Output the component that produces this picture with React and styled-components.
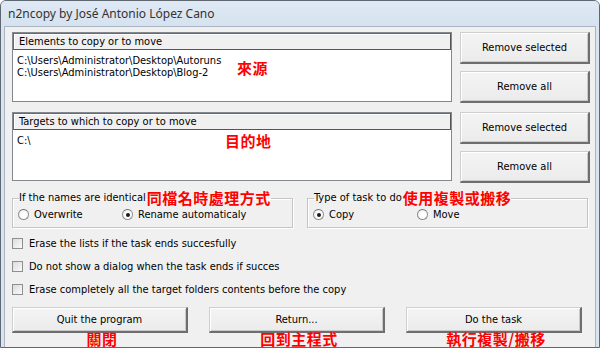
import React from "react";
import styled, { createGlobalStyle } from "styled-components";

const Global = createGlobalStyle`
  html, body { margin: 0; padding: 0; background: #fff; }
  body { width: 600px; height: 348px; overflow: hidden; }
  * { box-sizing: border-box; }
`;

const UI = `"DejaVu Sans Condensed", "Liberation Sans", sans-serif`;
const CJK = `"Noto Sans CJK TC", "Noto Sans CJK SC", sans-serif`;

const Window = styled.div`
  position: relative;
  width: 600px;
  height: 348px;
  border: 1px solid #5f6770;
  border-radius: 6px 6px 0 0;
  background: #d9e4f0;
  display: flex;
  flex-direction: column;
  overflow: hidden;
`;

const TitleBar = styled.div`
  height: 25px;
  flex: none;
  display: flex;
  align-items: center;
  padding-left: 7px;
  font-family: "Noto Sans", "Open Sans", sans-serif;
  font-size: 12px;
  color: #333;
  background: linear-gradient(#dfe9f5, #d6e2ef);
`;

const Client = styled.div`
  flex: 1;
  min-height: 0;
  margin: 0 3px 0 3px;
  border: 1px solid #a8b4c2;
  border-bottom: none;
  background: #f0f0f0;
  padding: 5px 6px 0 7px;
  display: flex;
  flex-direction: column;
  font-family: ${UI};
  font-size: 11px;
  color: #000;
`;

const ListRow = styled.div`
  display: grid;
  grid-template-columns: 440px 130px;
  column-gap: 8px;
  height: 72px;
  flex: none;
  margin-bottom: ${(p) => p.$mb || 0}px;
`;

const ListBox = styled.div`
  position: relative;
  height: ${(p) => p.$h}px;
  background: #fff;
  border: 1px solid #828790;
  display: flex;
  flex-direction: column;
`;

const ListHeader = styled.div`
  height: 17px;
  flex: none;
  background: #f0f0f0;
  border: 1px solid #6b6b6b;
  border-right-color: #555;
  border-bottom-color: #555;
  box-shadow: inset 1px 1px 0 #fff;
  padding-left: 5px;
  display: flex;
  align-items: center;
`;

const ListItems = styled.div`
  padding: 5px 0 0 4px;
  line-height: 12px;
`;

const Item = styled.div`
  white-space: nowrap;
`;

const Note = styled.span`
  font-family: ${CJK};
  font-weight: 700;
  font-size: 15px;
  line-height: 16px;
  color: #ff0000;
  white-space: nowrap;
  letter-spacing: 0.5px;
`;

const ListNote = styled(Note)`
  position: absolute;
  left: ${(p) => p.$x}px;
  top: ${(p) => p.$y}px;
`;

const ButtonStack = styled.div`
  display: flex;
  flex-direction: column;
  gap: 7px;
`;

const Button = styled.button`
  height: ${(p) => p.$h || 32}px;
  width: 100%;
  flex: none;
  font-family: ${UI};
  font-size: 11px;
  color: #000;
  padding: 0;
  background: linear-gradient(#f4f4f4, #ebebeb);
  border: 1px solid #cfcfcf;
  border-right: 2px solid #6e6e6e;
  border-bottom: 2px solid #6e6e6e;
  box-shadow: inset 1px 1px 0 #fff, inset -1px -1px 0 #c9c9c9;
  cursor: default;
`;

const GroupRow = styled.div`
  display: grid;
  grid-template-columns: 281px 281px;
  column-gap: 14px;
  margin-top: 6px;
  flex: none;
`;

const Group = styled.fieldset`
  position: relative;
  margin: 0;
  height: 38px;
  border: 1px solid #c5c5c5;
  box-shadow: inset 1px 1px 0 #fff, 1px 1px 0 #fff;
  padding: 0 0 0 5px;
  display: flex;
  align-items: flex-start;
`;

const Legend = styled.legend`
  padding: 0;
  margin-left: 1px;
  display: flex;
  align-items: center;
  gap: 1px;
  line-height: 12px;
`;

const RadioRow = styled.div`
  display: flex;
  align-items: center;
  margin-top: 2px;
`;

const RadioOption = styled.label`
  display: flex;
  align-items: center;
  gap: 5px;
  width: ${(p) => p.$w}px;
  white-space: nowrap;
`;

const RadioDot = styled.span`
  width: 11px;
  height: 11px;
  border-radius: 50%;
  border: 1px solid #8e8f8f;
  border-top-color: #6f6f6f;
  background: radial-gradient(circle at 60% 60%, #fff 40%, #e2e2e2 100%);
  display: flex;
  align-items: center;
  justify-content: center;
  &::after {
    content: "";
    width: 4px;
    height: 4px;
    border-radius: 50%;
    background: ${(p) => (p.$on ? "#1a1a1a" : "transparent")};
  }
`;

const Checks = styled.div`
  display: flex;
  flex-direction: column;
  gap: 9px;
  margin-top: 8px;
  flex: none;
`;

const CheckRow = styled.label`
  display: flex;
  align-items: center;
  gap: 6px;
  height: 14px;
  white-space: nowrap;
`;

const Box = styled.span`
  width: 11px;
  height: 11px;
  border: 1px solid #8f8f8f;
  background: linear-gradient(135deg, #dcdcdc, #fafafa);
`;

const BottomRow = styled.div`
  display: grid;
  grid-template-columns: 176px 176px 176px;
  column-gap: 21px;
  margin-top: 11px;
  flex: none;
`;

const BottomCell = styled.div`
  display: flex;
  flex-direction: column;
  align-items: center;
`;

const Caption = styled(Note)`
  margin-top: -2px;
  margin-left: 4px;
  line-height: 15px;
`;

export default function App() {
  return (
    <>
      <Global />
      <Window>
        <TitleBar>n2ncopy by José Antonio López Cano</TitleBar>
        <Client>
          <ListRow $mb={8}>
            <ListBox $h={70}>
              <ListHeader>Elements to copy or to move</ListHeader>
              <ListItems>
                <Item>C:\Users\Administrator\Desktop\Autoruns</Item>
                <Item>C:\Users\Administrator\Desktop\Blog-2</Item>
              </ListItems>
              <ListNote $x={224} $y={27}>來源</ListNote>
            </ListBox>
            <ButtonStack>
              <Button>Remove selected</Button>
              <Button>Remove all</Button>
            </ButtonStack>
          </ListRow>
          <ListRow>
            <ListBox $h={69}>
              <ListHeader>Targets to which to copy or to move</ListHeader>
              <ListItems>
                <Item>C:\</Item>
              </ListItems>
              <ListNote $x={212} $y={20}>目的地</ListNote>
            </ListBox>
            <ButtonStack>
              <Button>Remove selected</Button>
              <Button>Remove all</Button>
            </ButtonStack>
          </ListRow>
          <GroupRow>
            <Group>
              <Legend>
                If the names are identical<Note>同檔名時處理方式</Note>
              </Legend>
              <RadioRow>
                <RadioOption $w={104}>
                  <RadioDot />Overwrite
                </RadioOption>
                <RadioOption $w={160}>
                  <RadioDot $on />Rename automaticaly
                </RadioOption>
              </RadioRow>
            </Group>
            <Group>
              <Legend>
                Type of task to do <Note>使用複製或搬移</Note>
              </Legend>
              <RadioRow>
                <RadioOption $w={104}>
                  <RadioDot $on />Copy
                </RadioOption>
                <RadioOption $w={100}>
                  <RadioDot />Move
                </RadioOption>
              </RadioRow>
            </Group>
          </GroupRow>
          <Checks>
            <CheckRow><Box />Erase the lists if the task ends succesfully</CheckRow>
            <CheckRow><Box />Do not show a dialog when the task ends if succes</CheckRow>
            <CheckRow><Box />Erase completely all the target folders contents before the copy</CheckRow>
          </Checks>
          <BottomRow>
            <BottomCell>
              <Button $h={26}>Quit the program</Button>
              <Caption>關閉</Caption>
            </BottomCell>
            <BottomCell>
              <Button $h={26}>Return...</Button>
              <Caption>回到主程式</Caption>
            </BottomCell>
            <BottomCell>
              <Button $h={26}>Do the task</Button>
              <Caption>執行複製/搬移</Caption>
            </BottomCell>
          </BottomRow>
        </Client>
      </Window>
    </>
  );
}
